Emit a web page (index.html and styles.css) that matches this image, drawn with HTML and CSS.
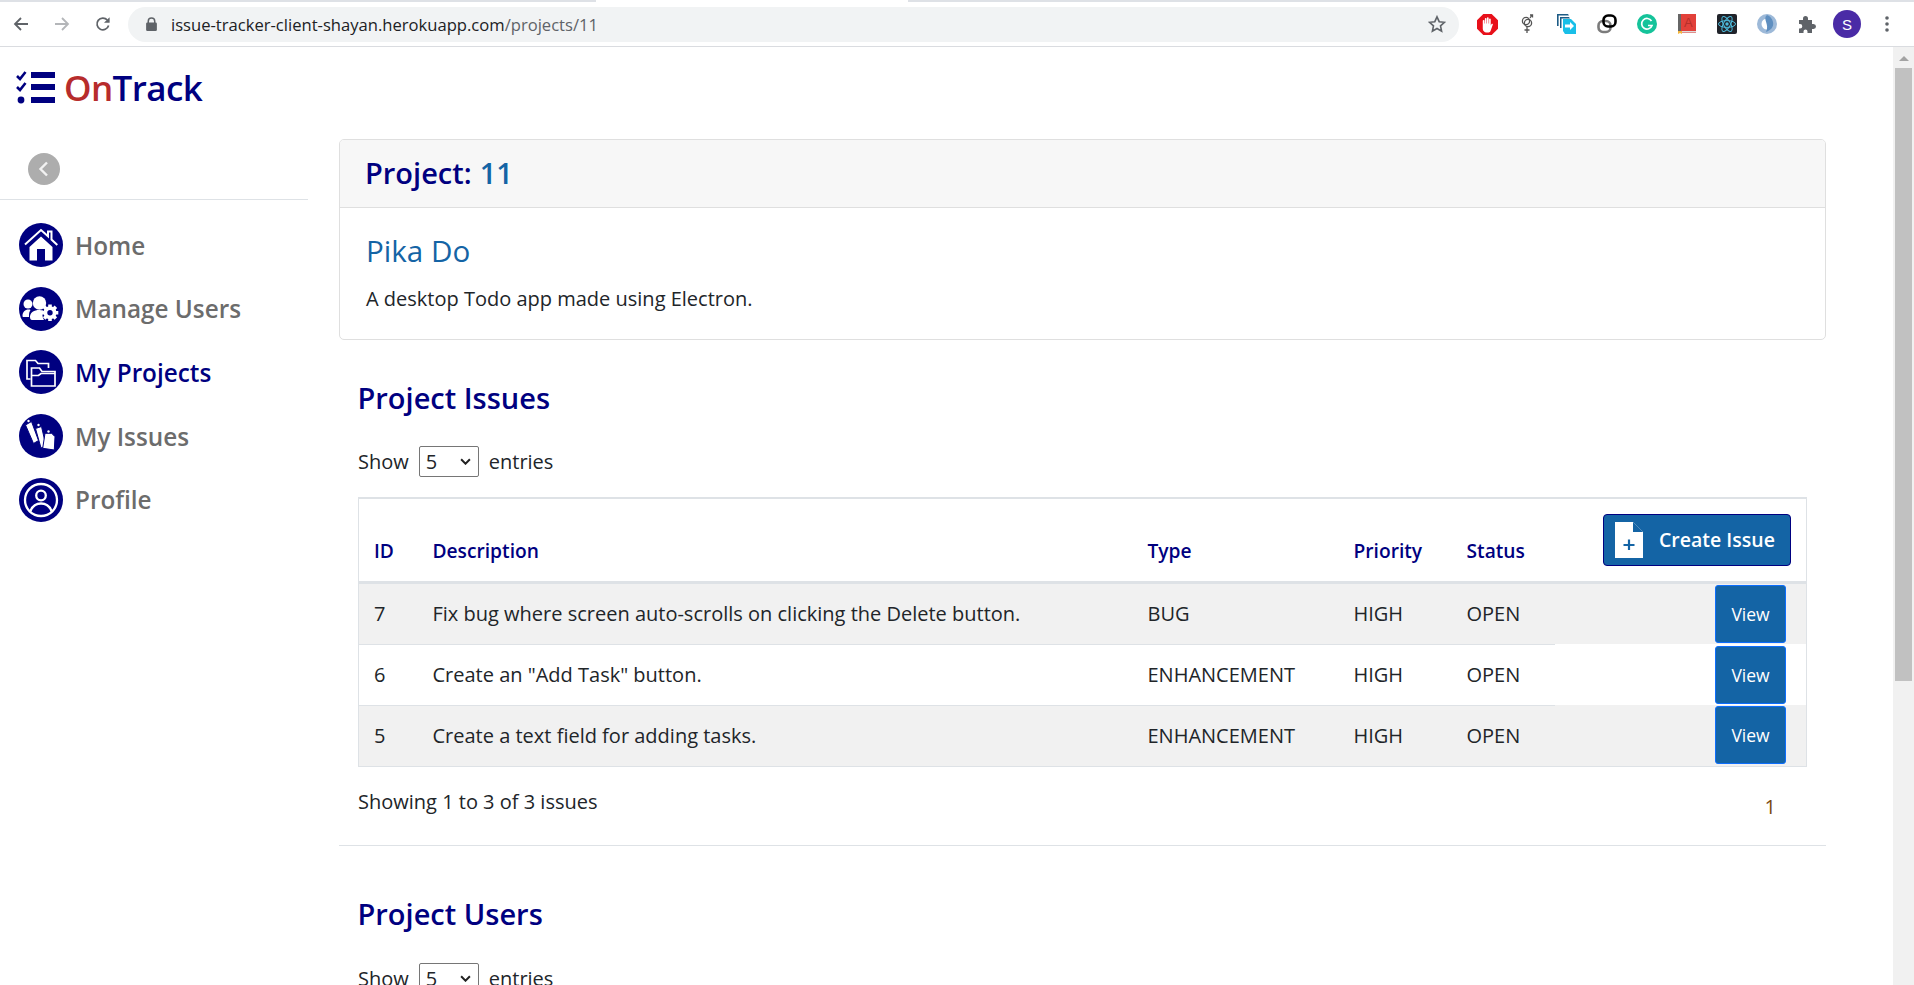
FILE: index.html
```html
<!DOCTYPE html>
<html>

<head>
    <title>OnTrack</title>
    <link rel="stylesheet" href="styles.css">
</head>

<body>
    <div class="tab-strip"><span class="tab-gap"></span></div>
    <header class="browser-bar">
        <div class="nav-btns">
            <svg width="16" height="16" viewBox="0 0 16 16"><path d="M15 8H2.5M8 2L2 8l6 6" fill="none" stroke="#5f6368" stroke-width="1.8"/></svg>
            <svg width="16" height="16" viewBox="0 0 16 16"><path d="M1 8h12.5M8 2l6 6-6 6" fill="none" stroke="#b4b6b9" stroke-width="1.8"/></svg>
            <svg width="16" height="16" viewBox="0 0 16 16"><path d="M13.6 9.5A5.9 5.9 0 1 1 12.3 4" fill="none" stroke="#5f6368" stroke-width="1.7"/><path d="M14.6 1.2v5.6H9z" fill="#5f6368"/></svg>
        </div>
        <div class="omnibox">
            <svg width="11" height="14" viewBox="0 0 10 13"><path d="M2 6V4a3 3 0 0 1 6 0v2" fill="none" stroke="#5f6368" stroke-width="1.4"/><rect y="5" width="10" height="8" rx="1.2" fill="#5f6368"/></svg>
            <span class="url">issue-tracker-client-shayan.herokuapp.com<span class="url-path">/projects/11</span></span>
            <svg class="star" width="18" height="18" viewBox="0 0 18 18"><path d="M9 1.8l2.2 4.9 5.3.6-4 3.6 1.1 5.3L9 13.500l-4.600 2.700 1.100-5.300-4-3.600 5.300-.6z" fill="none" stroke="#5f6368" stroke-width="1.600"/></svg>
        </div>
        <div class="ext-icons">
            <span class="ext"><svg width="21" height="21" viewBox="0 0 20 20"><path d="M6 0h8l6 6v8l-6 6H6l-6-6V6z" fill="#e8101a"/><path d="M5.500 11V6.500a.8.8 0 0 1 1.600 0V9h.4V4.500a.8.8 0 0 1 1.600 0V9h.4V3.800a.8.8 0 0 1 1.600 0V9h.4V5a.8.8 0 0 1 1.600 0v6l.7-1.500c.5-.7 1.600-.2 1.300.6L13 16c-.4 1-1 1.500-2 1.500H9c-2 0-3.500-1.500-3.500-3.500z" fill="#fff"/></svg></span>
            <span class="ext"><svg width="20" height="22" viewBox="0 0 20 22" fill="none" stroke="#555" stroke-width="1.300"><circle cx="9" cy="8" r="3.600"/><circle cx="11" cy="10" r="3.600"/><path d="M10 13.500V20M7.500 17h5M13 5l2-3M13 2h2.500v2.500"/></svg></span>
            <span class="ext"><svg width="20" height="20" viewBox="0 0 20 20"><path d="M0 0h11l1 1.600H1.600V12H0z" fill="#1d5c86"/><path d="M3 3h9l1 1.500H4.500V14H3z" fill="#1d5c86"/><path d="M6 5h8l5 5v10H8l-2-3z" fill="#19bfe8"/><path d="M8 10.500h5V8l4 4-4 4v-2.500H8z" fill="#fff"/></svg></span>
            <span class="ext"><svg width="20" height="20" viewBox="0 0 20 20" fill="none" stroke-width="2.600"><rect x="1.500" y="7" width="12" height="11" rx="4.500" stroke="#7b7b7b"/><rect x="6.500" y="1.500" width="12" height="11" rx="4.500" stroke="#000"/></svg></span>
            <span class="ext"><svg width="20" height="20" viewBox="0 0 20 20"><circle cx="10" cy="10" r="10" fill="#15c39a"/><path d="M14.500 7A5.300 5.300 0 1 0 15 11.500h-4" fill="none" stroke="#fff" stroke-width="1.700"/></svg></span>
            <span class="ext"><svg width="18" height="20" viewBox="0 0 18 20"><rect width="18" height="19" fill="#e2413a"/><rect width="3" height="19" fill="#666"/><rect x="3" y="17" width="15" height="1.500" fill="#ddd"/><path d="M0 17h4v3l-2-1-2 1z" fill="#f4b63c"/><text class="book-letter" x="6" y="13">A</text></svg></span>
            <span class="ext"><svg width="20" height="20" viewBox="0 0 20 20"><rect width="20" height="20" rx="2" fill="#20232a"/><g fill="none" stroke="#4dbbdc" stroke-width="1"><ellipse cx="10" cy="10" rx="8.500" ry="3.400"/><ellipse cx="10" cy="10" rx="8.500" ry="3.400" transform="rotate(60 10 10)"/><ellipse cx="10" cy="10" rx="8.500" ry="3.400" transform="rotate(120 10 10)"/></g><circle cx="10" cy="10" r="1.700" fill="#4dbbdc"/></svg></span>
            <span class="ext"><svg width="20" height="20" viewBox="0 0 20 20"><circle cx="10" cy="10" r="10" fill="#9db9d8"/><circle cx="10" cy="10" r="5.500" fill="#fff"/><path d="M10 1c-5 4 3 9-1 17 5-2 8-5 7-10-.5-3-3-6-6-7z" fill="#5f8fc0"/></svg></span>
            <span class="ext"><svg width="18" height="18" viewBox="0 0 18 18"><path d="M1 5h4V3.500a2.500 2.500 0 0 1 5 0V5h4v4h1.500a2.500 2.500 0 0 1 0 5H14v4H9.500v-1.500a2 2 0 0 0-4 0V18H1v-4.500h1a2.300 2.300 0 0 0 0-4.600H1z" fill="#5f6368"/></svg></span>
            <span class="ext"><span class="avatar">S</span></span>
            <span class="ext"><svg width="4" height="16" viewBox="0 0 4 16"><circle cx="2" cy="2" r="1.800" fill="#5f6368"/><circle cx="2" cy="8" r="1.800" fill="#5f6368"/><circle cx="2" cy="14" r="1.800" fill="#5f6368"/></svg></span>
        </div>
    </header>

    <div class="viewport">
        <div class="page">
            <aside class="sidebar">
                <div class="logo">
                    <svg width="40" height="33" viewBox="0 0 40 33"><path d="M1 5l3 3 5.500-7M1 16l3 3 5.500-7" fill="none" stroke="#000080" stroke-width="2.600"/><circle cx="5" cy="29" r="3.400" fill="#000080"/><path d="M15 1h24v6H15zM15 13h24v6H15zM15 26h24v6H15z" fill="#000080"/></svg>
                    <span class="logo-text"><span class="logo-on">On</span>Track</span>
                </div>
                <div class="collapse-row">
                    <span class="collapse-btn"><svg width="16" height="16" viewBox="0 0 16 16"><path d="M11 1.500L4.500 8l6.500 6.500" fill="none" stroke="#f2f2f2" stroke-width="2.400"/></svg></span>
                </div>
                <nav class="side-nav">
                    <a class="side-link"><span class="side-icon"><svg width="44" height="44" viewBox="0 0 44 44"><path d="M6 21.500L22 7l7 6.300V8.500h3.500v8L38.300 22" fill="none" stroke="#fff" stroke-width="2"/><path d="M10.500 24L22 13.500 33.500 24v13.500H26V26h-8v11.500h-7.500z" fill="#fff"/></svg></span>Home</a>
                    <a class="side-link"><span class="side-icon"><svg width="44" height="44" viewBox="0 0 44 44" fill="#fff"><circle cx="20.500" cy="16" r="6.700"/><circle cx="9" cy="17" r="4.500"/><path d="M3.500 29c0-4 2.500-6.500 6-6.500 1 0 1.500.2 2 .4-1 1.500-1.500 3-1.500 5.100V30H4.500c-.6 0-1-.4-1-1z"/><path d="M11 30c0-4.500 4-7 9.500-7 1.500 0 3 .2 4 .6-1.500 3-1.500 6.400.5 9.400H13c-1.200 0-2-1.300-2-3z"/><g transform="translate(31 25.700)"><circle r="6.500"/><circle r="2.700" fill="#000080"/><path d="M-1.800-8.300h3.600V-5h-3.600zM-1.800 5h3.600v3.300h-3.600zM-8.300-1.800H-5v3.600h-3.300zM5-1.800h3.300v3.600H5z"/><path d="M-1.800-8.300h3.600V-5h-3.600zM-1.800 5h3.600v3.300h-3.600z" transform="rotate(45)"/><path d="M-1.800-8.300h3.600V-5h-3.600zM-1.800 5h3.600v3.300h-3.600z" transform="rotate(-45)"/></g></svg></span>Manage Users</a>
                    <a class="side-link active"><span class="side-icon"><svg width="44" height="44" viewBox="0 0 44 44" fill="none" stroke="#fff" stroke-width="1.700"><path d="M11.500 29H8V10.500h8.500l2.500 3h10.500V18"/><path d="M12.500 36V18h8l2.500 3.500h13V36z"/><path d="M12.500 25.500h7l2.500-2h14"/></svg></span>My Projects</a>
                    <a class="side-link"><span class="side-icon"><svg width="44" height="44" viewBox="0 0 44 44" fill="#fff" stroke="#000080" stroke-width="1"><path d="M6.500 11l6-3.500 7 19-5 3z"/><path d="M16.500 14.500l6-2 4.500 19.500-5 2z"/><path d="M26 19.300h6.700l3.300 3.400-.7 13.300-11.600-1.700z"/><circle cx="9.500" cy="7" r="1.200" stroke="none"/><circle cx="19.500" cy="11" r="1.200" stroke="none"/><circle cx="29.500" cy="17.500" r="1.200" stroke="none"/></svg></span>My Issues</a>
                    <a class="side-link"><span class="side-icon"><svg width="44" height="44" viewBox="0 0 44 44" fill="none" stroke="#fff" stroke-width="2.300"><circle cx="22" cy="22" r="16"/><circle cx="22" cy="17.500" r="4.800"/><path d="M11.500 33c2-5 6-7.500 10.500-7.500S30.500 28 32.500 33"/></svg></span>Profile</a>
                </nav>
            </aside>

            <main class="content">
                <section class="card">
                    <h2 class="card-header">Project: <span class="project-id">11</span></h2>
                    <div class="card-body">
                        <h3 class="project-name">Pika Do</h3>
                        <p class="project-desc">A desktop Todo app made using Electron.</p>
                    </div>
                </section>

                <section class="list-section">
                    <h2 class="section-title">Project Issues</h2>
                    <div class="show-entries">Show <span class="fake-select">5<svg width="11" height="7" viewBox="0 0 10 6"><path d="M1 1l4 4 4-4" fill="none" stroke="#222" stroke-width="1.800"/></svg></span> entries</div>
                    <table class="issues-table">
                        <thead>
                            <tr>
                                <th class="col-id">ID</th>
                                <th class="col-desc">Description</th>
                                <th class="col-type">Type</th>
                                <th class="col-priority">Priority</th>
                                <th class="col-status">Status</th>
                                <th class="col-action">
                                    <button class="create-btn" type="button">
                                        <svg width="28" height="36" viewBox="0 0 28 36"><path d="M0 0h18l10 10v26H0z" fill="#fff"/><path d="M18 0l10 10H18z" fill="#1464a5"/><path d="M14 17.500v10.500M8.500 23h11" stroke="#1464a5" stroke-width="2.200"/></svg>
                                        Create Issue
                                    </button>
                                </th>
                            </tr>
                        </thead>
                        <tbody>
                            <tr>
                                <td>7</td>
                                <td>Fix bug where screen auto-scrolls on clicking the Delete button.</td>
                                <td>BUG</td>
                                <td>HIGH</td>
                                <td>OPEN</td>
                                <td class="cell-action"><button class="view-btn" type="button">View</button></td>
                            </tr>
                            <tr>
                                <td>6</td>
                                <td>Create an "Add Task" button.</td>
                                <td>ENHANCEMENT</td>
                                <td>HIGH</td>
                                <td>OPEN</td>
                                <td class="cell-action"><button class="view-btn" type="button">View</button></td>
                            </tr>
                            <tr>
                                <td>5</td>
                                <td>Create a text field for adding tasks.</td>
                                <td>ENHANCEMENT</td>
                                <td>HIGH</td>
                                <td>OPEN</td>
                                <td class="cell-action"><button class="view-btn" type="button">View</button></td>
                            </tr>
                        </tbody>
                    </table>
                    <div class="table-foot">
                        <span>Showing 1 to 3 of 3 issues</span>
                        <span class="page-num">1</span>
                    </div>
                </section>

                <hr class="divider">

                <section class="list-section">
                    <h2 class="section-title users-title">Project Users</h2>
                    <div class="show-entries users-show">Show <span class="fake-select">5<svg width="11" height="7" viewBox="0 0 10 6"><path d="M1 1l4 4 4-4" fill="none" stroke="#222" stroke-width="1.800"/></svg></span> entries</div>
                </section>
            </main>
        </div>

        <div class="scrollbar">
            <span class="scroll-arrow"></span>
            <span class="scroll-thumb"></span>
        </div>
    </div>
</body>

</html>
```

FILE: styles.css
```css
/* page */
html,
body {
    height: 100%;
    margin: 0;
    padding: 0;
    overflow: hidden;
}

body {
    font-family: "Open Sans", "Noto Sans", sans-serif;
    font-size: 20px;
    color: #212529;
    background: #fff;
    display: flex;
    flex-direction: column;
}

/* browser toolbar */
.tab-strip {
    height: 2px;
    flex: none;
    background: #dee1e6;
}

.tab-gap {
    display: block;
    width: 312px;
    height: 2px;
    margin-left: 596px;
    background: #fff;
}

.browser-bar {
    height: 45px;
    flex: none;
    display: flex;
    align-items: center;
    background: #fff;
    border-bottom: 1px solid #dadce0;
    box-sizing: border-box;
}

.nav-btns {
    width: 128px;
    padding-left: 13px;
    box-sizing: border-box;
    display: flex;
    gap: 25px;
    flex: none;
}

.omnibox {
    width: 1331px;
    height: 35px;
    flex: none;
    background: #f1f3f4;
    border-radius: 18px;
    display: flex;
    align-items: center;
    padding: 0 13px 0 18px;
    box-sizing: border-box;
}

.url {
    font-family: "Open Sans", sans-serif;
    font-size: 16.6px;
    color: #202124;
    margin-left: 14px;
    flex: 1;
}

.url-path {
    color: #5f6368;
}

.ext-icons {
    display: flex;
    align-items: center;
    margin-left: 8px;
}

.ext {
    width: 40px;
    height: 32px;
    display: flex;
    align-items: center;
    justify-content: center;
}

.book-letter {
    font-family: "Liberation Sans", sans-serif;
    font-size: 13px;
    fill: #b5302a;
}

.avatar {
    width: 28px;
    height: 28px;
    border-radius: 50%;
    background: #4a2ba6;
    color: #fff;
    font-family: "Liberation Sans", sans-serif;
    font-size: 15px;
    display: flex;
    align-items: center;
    justify-content: center;
}

/* page area */
.viewport {
    flex: 1;
    display: flex;
    min-height: 0;
}

.page {
    flex: 1;
    display: flex;
    overflow: hidden;
}

.scrollbar {
    width: 21px;
    flex: none;
    background: #f1f1f1;
    display: flex;
    flex-direction: column;
    align-items: center;
}

.scroll-arrow {
    width: 0;
    height: 0;
    margin: 9px 0 7px;
    border-left: 5px solid transparent;
    border-right: 5px solid transparent;
    border-bottom: 5px solid #a3a3a3;
}

.scroll-thumb {
    width: 17px;
    height: 613px;
    background: #c1c1c1;
}

/* sidebar */
.sidebar {
    width: 308px;
    flex: none;
}

.logo {
    display: flex;
    align-items: center;
    height: 80px;
    padding-left: 16px;
    gap: 8px;
}

.logo-text {
    font-size: 35px;
    font-weight: 600;
    letter-spacing: -0.6px;
    color: #000080;
}

.logo-on {
    color: #b72c2c;
}

.collapse-row {
    height: 73px;
    padding: 26px 0 0 28px;
    border-bottom: 1px solid #dee2e6;
    box-sizing: border-box;
    display: flex;
    align-items: flex-start;
}

.collapse-btn {
    width: 32px;
    height: 32px;
    border-radius: 50%;
    background: #adadad;
    display: flex;
    align-items: center;
    justify-content: center;
}

.side-nav {
    display: flex;
    flex-direction: column;
    padding: 23px 0 0 19px;
    gap: 19.7px;
}

.side-link {
    display: flex;
    align-items: center;
    height: 44px;
    gap: 12px;
    font-size: 24.3px;
    font-weight: 600;
    color: #6c6c6c;
}

.side-link.active {
    color: #000080;
}

.side-icon {
    width: 44px;
    height: 44px;
    border-radius: 50%;
    background: #000080;
    overflow: hidden;
    flex: none;
}

.side-icon svg {
    display: block;
}

/* main */
.content {
    width: 1487px;
    margin: 92px 0 0 31px;
    flex: none;
}

.card {
    border: 1px solid #dfdfdf;
    border-radius: 5px;
    overflow: hidden;
}

.card-header {
    margin: 0;
    height: 68px;
    padding: 0 0 3px 25px;
    box-sizing: border-box;
    background: #f7f7f7;
    border-bottom: 1px solid #dfdfdf;
    display: flex;
    align-items: center;
    gap: 8px;
    font-size: 29px;
    font-weight: 600;
    color: #000080;
}

.project-id {
    color: #1464a5;
}

.card-body {
    padding: 24px 26px 0;
    height: 131px;
    box-sizing: border-box;
}

.project-name {
    margin: 0;
    font-size: 29.6px;
    font-weight: 400;
    color: #1464a5;
    line-height: 38px;
}

.project-desc {
    margin: 15px 0 0;
    line-height: 27px;
}

.list-section {
    padding: 0 19px;
}

.section-title {
    margin: 38px 0 0 -0.5px;
    font-size: 29px;
    font-weight: 600;
    color: #000080;
    line-height: 40px;
}

.users-title {
    margin-top: 48px;
}

.show-entries {
    display: flex;
    align-items: center;
    gap: 10px;
    margin-top: 27px;
    height: 32px;
}

.users-show {
    margin-top: 29px;
}

.fake-select {
    width: 60px;
    height: 31px;
    border: 1px solid #767676;
    border-radius: 2px;
    box-sizing: border-box;
    display: flex;
    align-items: center;
    justify-content: space-between;
    padding: 0 7px 0 6px;
}

.issues-table {
    width: 100%;
    margin-top: 20px;
    border-collapse: collapse;
    border: 2px solid #dee2e6;
    border-width: 2px 1px 1px;
    table-layout: fixed;
}

.issues-table th {
    height: 84px;
    box-sizing: border-box;
    text-align: left;
    vertical-align: bottom;
    padding: 0 0 17px 15px;
    font-size: 19.2px;
    font-weight: 600;
    color: #000080;
    border-bottom: 3px solid #dee2e6;
}

.col-id {
    width: 59px;
}

.col-type {
    width: 206px;
}

.col-priority {
    width: 113px;
}

.col-status {
    width: 103px;
}

.col-action {
    width: 252px;
}

.issues-table th.col-action {
    padding: 0 15px 15px 0;
    text-align: right;
}

.issues-table td {
    height: 60px;
    padding: 0 0 0 15px;
    border-top: 1px solid #dee2e6;
}

.issues-table tbody tr:first-child td {
    border-top: 0;
}

.issues-table tbody tr:nth-child(odd) {
    background: #f1f1f1;
}

.issues-table td.cell-action {
    border-top: 0;
    text-align: right;
    padding: 0 20px 0 0;
}

.create-btn {
    height: 52px;
    width: 188px;
    background: #1464a5;
    border: 1px solid #000080;
    border-radius: 4px;
    color: #fff;
    font-family: inherit;
    font-size: 19.5px;
    font-weight: 600;
    display: inline-flex;
    align-items: center;
    gap: 16px;
    padding: 0 0 0 11px;
    vertical-align: bottom;
}

.view-btn {
    width: 71px;
    height: 58px;
    background: #1464a5;
    border: 1px solid #0d6efd;
    border-radius: 3px;
    color: #fff;
    font-family: inherit;
    font-size: 17.5px;
    padding: 0;
    vertical-align: middle;
}

.table-foot {
    display: flex;
    justify-content: space-between;
    margin-top: 21px;
}

.page-num {
    color: #7a4a12;
    margin: 5px 31px 0 0;
}

.divider {
    margin: 25px 0 0;
    border: 0;
    border-top: 1px solid #dee2e6;
}
```
